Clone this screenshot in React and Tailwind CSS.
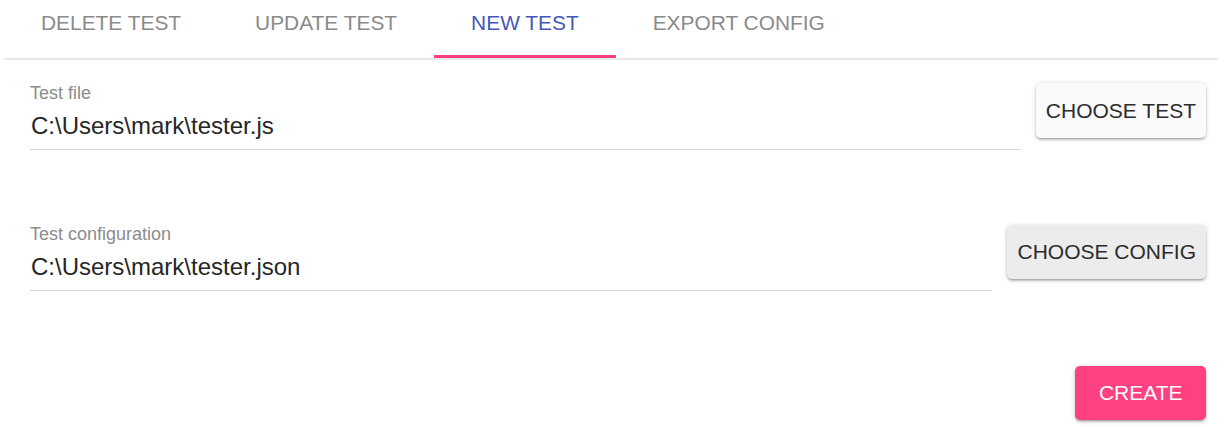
import React, { useState } from 'react';

const TABS = ['Delete test', 'Update test', 'New test', 'Export config'];

const Field = ({ label, value }) => (
    <div className="flex-1 min-w-0">
        <div className="text-[18px] leading-[20px] text-[#8c8c8c]">{label}</div>
        <div className="mt-[7px] text-[24px] leading-[32px] text-[#262626] pl-[1px] truncate">{value}</div>
        <div className="mt-[7px] h-px bg-[#d6d6d6]" />
    </div>
);

const App = () => {
    const [active, setActive] = useState(2);

    return (
        <div className="w-[1227px] h-[427px] bg-white overflow-hidden font-['Liberation_Sans',Arial,sans-serif]">
            {/* Tabs */}
            <div className="ml-[4px] mr-[9px] border-b-2 border-[#e8e8e8]">
                <div className="flex h-[58px]">
                    {TABS.map((tab, i) => (
                        <button
                            key={tab}
                            onClick={() => setActive(i)}
                            className={`relative px-[37px] pb-[12px] flex items-center uppercase text-[20.9px] ${i === active ? 'text-[#4457bd]' : 'text-[#8a8a8a]'}`}
                        >
                            {tab}
                            {i === active && (
                                <span className="absolute left-0 right-0 bottom-0 h-[3px] bg-[#ff4081]" />
                            )}
                        </button>
                    ))}
                </div>
            </div>

            {/* Form */}
            <div className="pl-[30px] pr-[21px] pt-[23px]">
                <div className="flex items-start gap-[15px]">
                    <Field label="Test file" value="C:\Users\mark\tester.js" />
                    <button className="h-[55px] px-[10px] rounded-[5px] bg-[#fafafa] text-[21px] text-[#2b2b2b] uppercase shadow-[0_1px_5px_rgba(0,0,0,0.2),0_2px_2px_rgba(0,0,0,0.14),0_3px_1px_-2px_rgba(0,0,0,0.12)]">
                        Choose test
                    </button>
                </div>

                <div className="mt-[74px] flex items-start gap-[15px]">
                    <Field label="Test configuration" value="C:\Users\mark\tester.json" />
                    <button className="mt-[1px] h-[54px] px-[10px] rounded-[5px] bg-[#ececec] text-[21px] text-[#2b2b2b] uppercase shadow-[0_1px_5px_rgba(0,0,0,0.2),0_2px_2px_rgba(0,0,0,0.14),0_3px_1px_-2px_rgba(0,0,0,0.12)]">
                        Choose config
                    </button>
                </div>

                <div className="mt-[75px] flex justify-end">
                    <button className="h-[54px] px-[23.5px] rounded-[5px] bg-[#ff4081] text-[21px] text-white uppercase shadow-[0_1px_5px_rgba(0,0,0,0.2),0_2px_2px_rgba(0,0,0,0.14),0_3px_1px_-2px_rgba(0,0,0,0.12)]">
                        Create
                    </button>
                </div>
            </div>
        </div>
    );
};

export default App;
